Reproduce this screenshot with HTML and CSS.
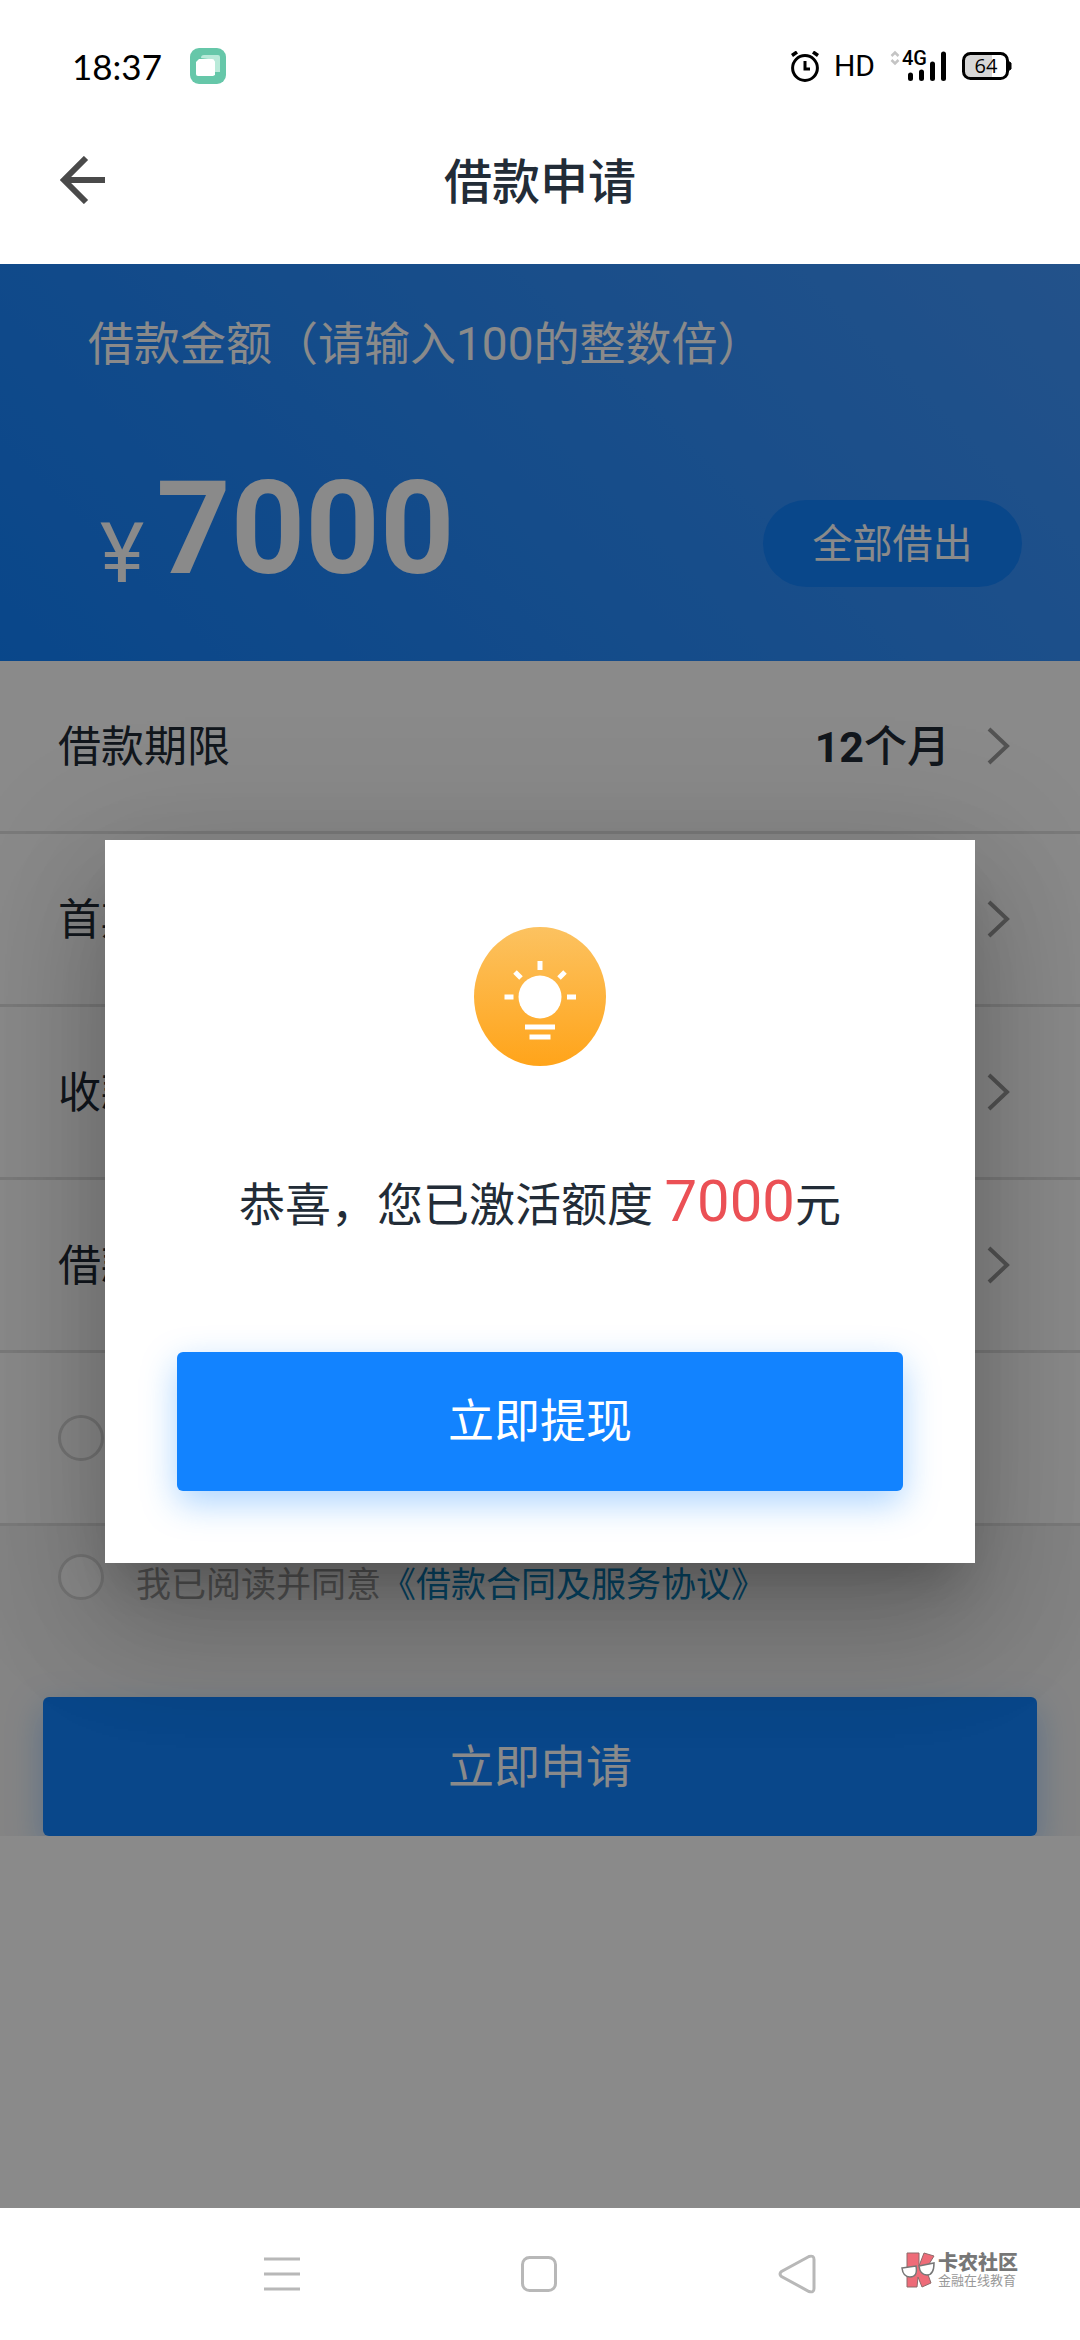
FILE: index.html
```html
<!DOCTYPE html>
<html lang="zh-CN">
<head>
<meta charset="utf-8">
<meta name="viewport" content="width=device-width, initial-scale=1">
<title>借款申请</title>
<link rel="stylesheet" href="styles.css">
</head>
<body>
<div class="status-bar">
  <span class="clock">18:37</span>
  <svg class="app-badge" width="36" height="36" viewBox="0 0 36 36" aria-hidden="true">
    <rect width="36" height="36" rx="9" fill="#66c7a9"/>
    <path d="M11 10a3 3 0 0 1 3-3h14a2 2 0 0 1 2 2v15h-5V12z" fill="#b9ead9"/>
    <path d="M6 14l3-3h13a3 3 0 0 1 3 3v13l-2 1H8a2 2 0 0 1-2-2z" fill="#fff"/>
  </svg>
  <div class="status-icons">
    <svg width="28" height="31" viewBox="0 0 28 31" fill="none" stroke="#000" aria-hidden="true">
      <circle cx="14" cy="17" r="12.4" stroke-width="3"/>
      <path d="M14 10v8h5" stroke-width="3"/>
      <path d="M1 4.500l5-3.500M27 4.500L22 1" stroke-width="3.500"/>
    </svg>
    <span class="hd">HD</span>
    <svg width="57" height="40" viewBox="0 -4 57 40" aria-hidden="true">
      <path d="M1.500 6L5 2.500 8.500 6M1.500 10L5 13.500 8.500 10" fill="none" stroke="#c4c4c4" stroke-width="2.500"/>
      <text class="net" x="12" y="15">4G</text>
      <path d="M20.500 25v3.500M31.500 22v6.500M42.500 14v14.500M53.500 4v24.500" stroke="#000" stroke-width="5" stroke-linecap="round"/>
    </svg>
    <svg width="50" height="28" viewBox="0 0 50 28" aria-hidden="true">
      <path d="M7 2h23v24H7a5 5 0 0 1-5-5V7a5 5 0 0 1 5-5z" fill="#d6d6d6"/>
      <rect x="1.500" y="1.500" width="44" height="25" rx="7" fill="none" stroke="#000" stroke-width="3"/>
      <path d="M46 9l3 2v6l-3 2z" stroke="#000" stroke-width="1"/>
      <text class="battery" x="24" y="21" text-anchor="middle">64</text>
    </svg>
  </div>
</div>

<header class="title-bar">
  <button class="back" type="button" aria-label="返回">
    <svg width="46" height="48" viewBox="0 0 46 48" fill="none" stroke="#4a4a4a" stroke-width="6" aria-hidden="true">
      <path d="M45 24H5M26 2L4 24l22 22"/>
    </svg>
  </button>
  <h1 class="title">借款申请</h1>
</header>

<main class="screen">
  <section class="hero">
    <label class="hero-label" for="amount">借款金额（请输入100的整数倍）</label>
    <div class="hero-row">
      <span class="currency">¥</span>
      <input class="amount" id="amount" type="text" inputmode="numeric" value="7000">
      <button class="borrow-all" type="button">全部借出</button>
    </div>
  </section>

  <section class="rows">
    <button class="row" type="button">
      <span class="name">借款期限</span>
      <span class="value"><b>12</b>个月</span>
      <svg class="chevron" width="24" height="38" viewBox="0 0 24 38"><path d="M2 2l18 17L2 36"/></svg>
    </button>
    <button class="row" type="button">
      <span class="name">首期</span>
      <svg class="chevron" width="24" height="38" viewBox="0 0 24 38"><path d="M2 2l18 17L2 36"/></svg>
    </button>
    <button class="row" type="button">
      <span class="name">收款</span>
      <svg class="chevron" width="24" height="38" viewBox="0 0 24 38"><path d="M2 2l18 17L2 36"/></svg>
    </button>
    <button class="row" type="button">
      <span class="name">借款</span>
      <svg class="chevron" width="24" height="38" viewBox="0 0 24 38"><path d="M2 2l18 17L2 36"/></svg>
    </button>
    <div class="row">
      <input class="tick" type="checkbox" aria-label="选项">
    </div>
  </section>

  <section class="confirm">
    <div class="agreement">
      <input class="tick" id="agree" type="checkbox">
      <p class="terms"><label for="agree">我已阅读并同意</label><a href="#terms">《借款合同及服务协议》</a></p>
    </div>
    <button class="primary" type="button">立即申请</button>
  </section>

  <div class="overlay">
    <div class="dialog" role="dialog" aria-modal="true" aria-labelledby="message">
      <svg class="bulb" width="132" height="139" viewBox="0 0 132 139" aria-hidden="true">
        <defs>
          <linearGradient id="glow" x1="0" y1="0" x2="0" y2="1">
            <stop offset="0" stop-color="#fcc260"/>
            <stop offset="1" stop-color="#ffa41a"/>
          </linearGradient>
        </defs>
        <ellipse cx="66" cy="69.500" rx="66" ry="69.500" fill="url(#glow)"/>
        <circle cx="66" cy="70" r="21.500" fill="#fff"/>
        <path d="M66 34v9M30.500 70h9M93 70h9M41 45l6 6M91 45l-6 6M51 100h30M55.500 110h21" stroke="#fff" stroke-width="5" fill="none"/>
      </svg>
      <p class="message" id="message">恭喜，您已激活额度 <span class="quota">7000</span>元</p>
      <button class="primary" type="button">立即提现</button>
    </div>
  </div>
</main>

<nav class="nav-bar">
  <button type="button" aria-label="菜单">
    <svg width="36" height="40" viewBox="0 0 36 40"><path d="M0 5h36M0 20h36M0 35h36"/></svg>
  </button>
  <button type="button" aria-label="主页">
    <svg width="36" height="40" viewBox="0 0 36 40"><rect x="1.500" y="3.500" width="33" height="33" rx="7"/></svg>
  </button>
  <button type="button" aria-label="后退">
    <svg width="38" height="40" viewBox="0 0 38 40"><path d="M31 2.500L3.500 17.500q-3 2.500 0 5L31 37.500q5 1.500 5-3V5.500q0-4.500-5-3z"/></svg>
  </button>
  <div class="watermark">
    <svg width="34" height="36" viewBox="0 0 34 36" aria-hidden="true">
      <path d="M6 1h12v13L23 1l10 3-8 13 5 14-9 4-4-10-1 10H6z" fill="#ee6b78" stroke="#8d6a6a" stroke-width="1"/>
      <path d="M1 16l14-2q2 11-6 11Q2 25 1 16zM18 14l15-3q0 12-7 12-7 0-8-9z" fill="#fff" stroke="#777" stroke-width="1.500"/>
    </svg>
    <div class="brand">
      <strong>卡农社区</strong>
      <small>金融在线教育</small>
    </div>
  </div>
</nav>
</body>
</html>
```

FILE: styles.css
```css
* {
  box-sizing: border-box;
}

body {
  margin: 0;
  min-height: 100vh;
  display: flex;
  flex-direction: column;
  background: #fff;
  color: #222c37;
  font-family: Roboto, "Noto Sans CJK SC", sans-serif;
  font-size: 43px;
}

button,
input {
  margin: 0;
  padding: 0;
  border: 0;
  background: none;
  color: inherit;
  font: inherit;
}

svg {
  display: block;
  flex: none;
}

/* System status bar */

.status-bar {
  display: flex;
  align-items: center;
  gap: 28px;
  height: 96px;
  padding: 36px 68px 0 72px;
  color: #000;
}

.clock {
  font-family: Lato, sans-serif;
  font-size: 35px;
  line-height: 60px;
}

.status-icons {
  display: flex;
  align-items: center;
  gap: 15px;
  margin-left: auto;
}

.hd {
  font-size: 30px;
  line-height: 32px;
}

.net {
  font: 500 20px Roboto, sans-serif;
}

.battery {
  font: 20px "Open Sans", sans-serif;
}

/* Title bar */

.title-bar {
  display: grid;
  grid-template-columns: 60px 1fr 60px;
  align-items: center;
  height: 168px;
  padding: 0 60px;
}

.title {
  margin: 0;
  padding-bottom: 4px;
  text-align: center;
  font-size: 48px;
  font-weight: 500;
}

/* Page content */

.screen {
  position: relative;
  flex: 1;
  overflow: hidden;
}

.hero {
  height: 397px;
  padding: 46px 58px 0 88px;
  background: linear-gradient(45deg, #1283ff, #4198ff);
  color: #fff;
}

.hero-label {
  display: block;
  font-size: 46px;
  line-height: 68px;
}

.hero-row {
  display: flex;
  align-items: flex-end;
  height: 230px;
}

.currency {
  margin: 0 12px;
  font-size: 84px;
  line-height: 84px;
  padding-bottom: 12px;
}

.amount {
  flex: 1;
  min-width: 0;
  height: 160px;
  font-size: 130px;
  font-weight: 700;
}

.borrow-all {
  width: 259px;
  height: 87px;
  margin-bottom: 21px;
  padding-bottom: 6px;
  border-radius: 44px;
  background: #1283ff;
  font-size: 40px;
}

.rows {
  background: #fff;
}

.row {
  display: flex;
  align-items: center;
  width: 100%;
  height: 173px;
  padding: 0 69px 0 58px;
  border-bottom: 3px solid #e2e2e2;
  text-align: left;
}

.name,
.value {
  padding-bottom: 6px;
}

.value {
  margin-left: auto;
  font-weight: 500;
}

.chevron {
  margin-left: auto;
  fill: none;
  stroke: #999;
  stroke-width: 4;
}

.value + .chevron {
  margin-left: 37px;
}

.tick {
  flex: none;
  appearance: none;
  width: 46px;
  height: 46px;
  border: 3px solid #d8d8d8;
  border-radius: 50%;
  background: #fff;
}

.confirm {
  padding: 28px 43px 0;
  overflow: hidden;
  background: #f4f4f4;
}

.agreement {
  display: flex;
  gap: 32px;
  padding-left: 15px;
}

.terms {
  margin: 0;
  color: #999;
  font-size: 35px;
  line-height: 64px;
}

.terms a {
  color: #0d82bd;
  text-decoration: none;
}

.primary {
  display: block;
  width: 100%;
  height: 139px;
  padding-bottom: 8px;
  border-radius: 6px;
  background: #1283ff;
  box-shadow: 0 12px 35px rgba(18, 131, 255, 0.35);
  color: #fff;
  font-size: 46px;
}

.confirm .primary {
  margin-top: 79px;
}

/* Dialog */

.overlay {
  position: absolute;
  inset: 0;
  display: flex;
  align-items: center;
  padding: 0 105px 70px;
  background: rgba(0, 0, 0, 0.46);
}

.dialog {
  flex: 1;
  padding: 87px 72px 72px;
  background: #fff;
  box-shadow:
    0 32px 43px -20px rgba(0, 0, 0, 0.2),
    0 69px 109px 9px rgba(0, 0, 0, 0.14),
    0 26px 132px 23px rgba(0, 0, 0, 0.12);
}

.bulb {
  margin: 0 auto;
}

.message {
  margin: 100px 0 112px;
  text-align: center;
  font-size: 46px;
  line-height: 70px;
}

.quota {
  color: #eb5055;
  font-size: 58px;
}

/* System navigation */

.nav-bar {
  position: relative;
  display: flex;
  align-items: center;
  justify-content: center;
  gap: 221px;
  height: 132px;
}

.nav-bar button svg {
  fill: none;
  stroke: #b8b8b8;
  stroke-width: 3;
}

.watermark {
  position: absolute;
  right: 62px;
  top: 44px;
  display: flex;
  gap: 3px;
}

.brand {
  display: flex;
  flex-direction: column;
  color: #777;
}

.brand strong {
  font-size: 20px;
  font-weight: 900;
  line-height: 22px;
}

.brand small {
  color: #999;
  font-size: 13px;
  line-height: 14px;
}
```
